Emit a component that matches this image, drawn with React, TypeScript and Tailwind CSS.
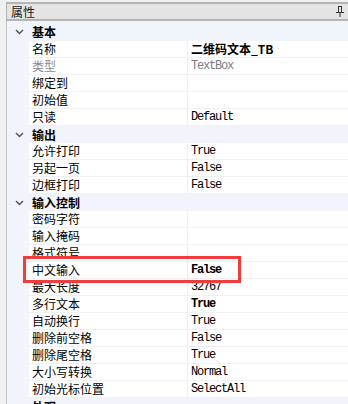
import React from "react"

type Row =
    | { kind: "cat"; label: string }
    | { kind: "prop"; name: string; value?: string; bold?: boolean; muted?: boolean }

const rows: Row[] = [
    { kind: "prop", name: "名称", value: "二维码文本_TB", bold: true },
    { kind: "prop", name: "类型", value: "TextBox", muted: true },
    { kind: "prop", name: "绑定到" },
    { kind: "prop", name: "初始值" },
    { kind: "prop", name: "只读", value: "Default" },
    { kind: "cat", label: "输出" },
    { kind: "prop", name: "允许打印", value: "True" },
    { kind: "prop", name: "另起一页", value: "False" },
    { kind: "prop", name: "边框打印", value: "False" },
    { kind: "cat", label: "输入控制" },
    { kind: "prop", name: "密码字符" },
    { kind: "prop", name: "输入掩码" },
    { kind: "prop", name: "格式符号" },
    { kind: "prop", name: "中文输入", value: "False", bold: true },
    { kind: "prop", name: "最大长度", value: "32767" },
    { kind: "prop", name: "多行文本", value: "True", bold: true },
    { kind: "prop", name: "自动换行", value: "True" },
    { kind: "prop", name: "删除前空格", value: "False" },
    { kind: "prop", name: "删除尾空格", value: "True" },
    { kind: "prop", name: "大小写转换", value: "Normal" },
    { kind: "prop", name: "初始光标位置", value: "SelectAll" },
    { kind: "cat", label: "外观" },
]

const cjk = "font-['SimSun','Noto_Sans_CJK_SC',sans-serif]"
const mono = "font-['Liberation_Mono','Noto_Sans_CJK_SC',monospace]"

function Chevron() {
    return (
        <svg width="9" height="6" viewBox="0 0 9 6" className="block">
            <path d="M1 1 L4.5 4.5 L8 1" fill="none" stroke="#555" strokeWidth="1.5" />
        </svg>
    )
}

function Pin() {
    return (
        <svg width="8" height="11" viewBox="0 0 8 11" className="block">
            <rect x="2" y="0" width="4" height="1" fill="#333" />
            <rect x="2" y="0" width="1" height="6" fill="#333" />
            <rect x="5" y="0" width="1" height="6" fill="#333" />
            <rect x="0" y="6" width="8" height="1" fill="#333" />
            <rect x="3.5" y="7" width="1" height="4" fill="#333" />
        </svg>
    )
}

function CategoryRow({ label, first }: { label: string; first?: boolean }) {
    return (
        <div className={`flex items-center bg-[#f1f4fa] ${first ? "h-[20px] pt-[2px]" : "h-[17px]"}`}>
            <div className="w-[22px] flex justify-center pl-[2px]">
                <Chevron />
            </div>
            <span className={`${cjk} text-[12px] font-bold text-black leading-[16px] pl-[3px]`}>{label}</span>
        </div>
    )
}

function PropRow({ name, value, bold, muted }: { name: string; value?: string; bold?: boolean; muted?: boolean }) {
    const isCjk = value ? /[\u4e00-\u9fff]/.test(value) : false
    return (
        <div className="flex h-[17px]">
            <div className="w-[22px] shrink-0 bg-[#f1f4fa]" />
            <div className="w-[158px] shrink-0 bg-white border-b border-[#eef0f5] pl-[3px] flex items-center">
                <span className={`${cjk} text-[12px] leading-[16px] ${muted ? "text-[#8a8a8a]" : "text-black"}`}>{name}</span>
            </div>
            <div className="flex-1 bg-white border-b border-l border-[#eef0f5] pl-[3px] flex items-center">
                {value && (
                    <span
                        className={`${isCjk ? `${cjk} text-[12px]` : `${mono} text-[12px] tracking-[-1.2px]`} leading-[16px] ${bold ? "font-bold" : ""} ${muted ? "text-[#7a7a7a]" : "text-black"}`}
                    >
                        {value}
                    </span>
                )}
            </div>
        </div>
    )
}

export default function App() {
    return (
        <div className="relative w-[348px] h-[404px] overflow-hidden bg-[#f0f0f0] pt-[2px] pl-[6px]">
            {/* Panel header */}
            <div className="h-[19px] flex items-center justify-between bg-[#e4e4e4] border-t-2 border-b-2 border-l border-[#b4b4b4] pl-[4px] pr-[4px]">
                <span className={`${cjk} text-[12px] leading-[14px] text-[#1a1a1a]`}>属性</span>
                <Pin />
            </div>

            {/* Property grid */}
            <div className="border-l border-[#c4c4c4]">
                <CategoryRow label="基本" first />
                {rows.map((r, i) =>
                    r.kind === "cat" ? (
                        <CategoryRow key={i} label={r.label} />
                    ) : (
                        <PropRow key={i} name={r.name} value={r.value} bold={r.bold} muted={r.muted} />
                    )
                )}
            </div>

            {/* Highlight */}
            <div className="absolute left-[23px] top-[256px] w-[218px] h-[27px] border-[3px] border-[#f23b3b]" />
        </div>
    )
}
